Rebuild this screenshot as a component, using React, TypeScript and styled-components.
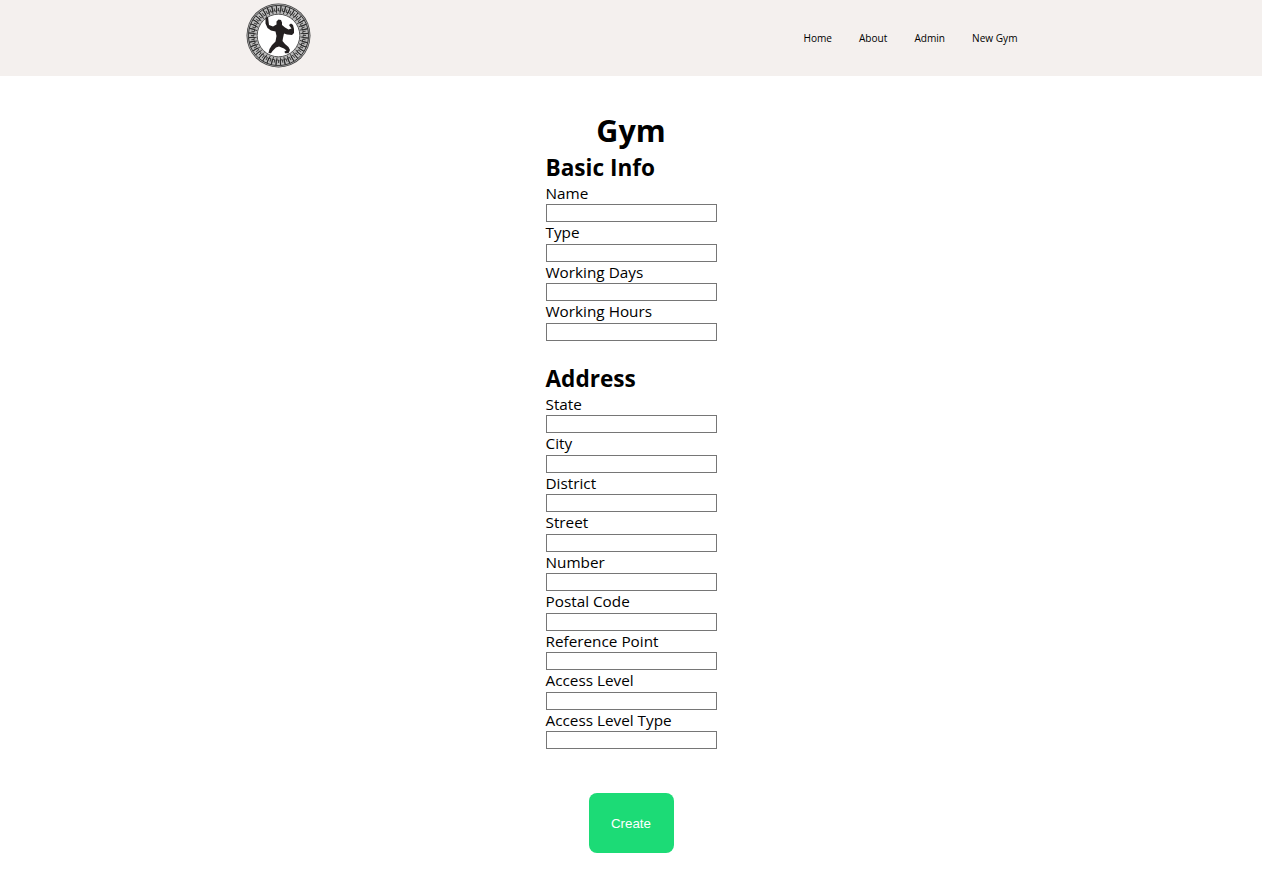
import React from "react";
import styled, { createGlobalStyle } from "styled-components";

const Global = createGlobalStyle`
  html, body { margin: 0; padding: 0; background: #fff; }
  body { font-family: "Open Sans", "Noto Sans", "Liberation Sans", sans-serif; color: #000; }
`;

const Header = styled.header`
  height: 76px;
  background: #f4f0ee;
  display: flex;
  align-items: flex-start;
  padding: 0 244.5px 0 246px;
`;
const Logo = styled.svg`
  width: 65px;
  height: 65px;
  margin-top: 3px;
  flex: none;
`;
const Nav = styled.nav`
  margin-left: auto;
  display: flex;
  gap: 27px;
  height: 76px;
  align-items: center;
`;
const NavLink = styled.a`
  font-size: 10.1px;
  color: #000;
  text-decoration: none;
`;
const Main = styled.main`
  width: 171px;
  margin: 0 auto;
  padding-top: 33px;
  display: flex;
  flex-direction: column;
`;
const Title = styled.h1`
  margin: 0;
  font-size: 30.5px;
  line-height: 42px;
  font-weight: 700;
  text-align: center;
`;
const SectionTitle = styled.h2`
  margin: 0;
  padding-top: 2px;
  font-size: 22.6px;
  line-height: 29.8px;
  font-weight: 700;
`;
const Section = styled.section`
  display: flex;
  flex-direction: column;
  margin-bottom: 21px;
`;
const Field = styled.label`
  display: flex;
  flex-direction: column;
  font-size: 15.3px;
  line-height: 21.85px;
`;
const Input = styled.input`
  box-sizing: border-box;
  width: 171px;
  height: 18px;
  margin-top: -0.35px;
  padding: 0;
  border: 1px solid #767676;
  background: #fff;
  display: block;
`;
const ButtonRow = styled.div`
  display: flex;
  justify-content: center;
  margin-top: 22.6px;
  padding-bottom: 30px;
`;
const CreateButton = styled.button`
  width: 85px;
  height: 60px;
  padding: 1px 0 0;
  border: 0;
  border-radius: 8px;
  background: #1cdb76;
  color: #fff;
  font-family: "Liberation Sans", Arial, sans-serif;
  font-size: 13.33px;
`;

const basic = ["Name", "Type", "Working Days", "Working Hours"];
const address = ["State", "City", "District", "Street", "Number", "Postal Code", "Reference Point", "Access Level", "Access Level Type"];

function LogoMark() {
  const units = Array.from({ length: 40 }, (_, i) => i * 9);
  return (
    <Logo viewBox="0 0 65 65" aria-label="Gym logo">
      <circle cx="32.5" cy="32.5" r="32" fill="#444" />
      <circle cx="32.5" cy="32.5" r="31.2" fill="#b8b8b8" />
      {units.map((a) => (
        <path
          key={a}
          transform={`rotate(${a} 32.5 32.5)`}
          d="M30.500 10.500V2.500h4.400v5.500h-2.400V5"
          fill="none"
          stroke="#262626"
          strokeWidth="0.8"
        />
      ))}
      <circle cx="32.5" cy="32.5" r="21.300" fill="#fff" stroke="#333" strokeWidth="0.8" />
      <path
        fill="#231f20"
        d="M19.500 14.500L22 14L22.500 18L23 22L27 23.500L30.500 21.500L30.500 18.500L32.500 16.500L35 17L36 19.500L36 22L39 24.500L42.500 26.500L45.500 25.500L44 23.500L43 22L45 20.500L47 22L48 26L48 30L46 32L41 31.500L38 30.500L37 35L36.500 38L39 41L42.500 44L44 47L42.500 50.200L39 50.200L38.500 48.500L40.500 47.500L38 45.500L33 43.500L30 44.500L26.500 48L25 50.200L22.500 50L23.500 46L26 42L29.500 38.500L30.500 33L29.500 28.500L25 27.500L21.500 25L19.500 20.500Z"
      />
    </Logo>
  );
}

export default function App() {
  return (
    <>
      <Global />
      <Header>
        <LogoMark />
        <Nav>
          <NavLink href="#">Home</NavLink>
          <NavLink href="#">About</NavLink>
          <NavLink href="#">Admin</NavLink>
          <NavLink href="#">New Gym</NavLink>
        </Nav>
      </Header>
      <Main>
        <Title>Gym</Title>
        <Section>
          <SectionTitle>Basic Info</SectionTitle>
          {basic.map((l) => (
            <Field key={l}>{l}<Input /></Field>
          ))}
        </Section>
        <Section>
          <SectionTitle>Address</SectionTitle>
          {address.map((l) => (
            <Field key={l}>{l}<Input /></Field>
          ))}
        </Section>
        <ButtonRow>
          <CreateButton>Create</CreateButton>
        </ButtonRow>
      </Main>
    </>
  );
}
